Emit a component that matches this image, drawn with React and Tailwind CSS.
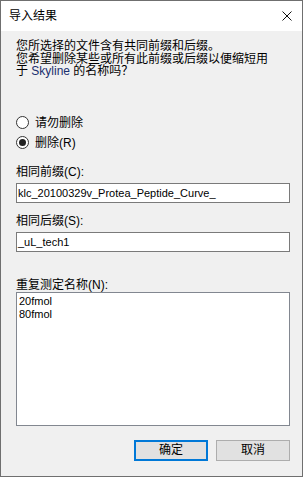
import React from "react";

const font = {
  fontFamily: '"Liberation Sans", "Noto Sans CJK SC", sans-serif',
};

function Radio({ checked, label }) {
  return (
    <div className="flex items-center h-[20px]">
      <span className="w-[13px] h-[13px] rounded-full border border-[#333333] bg-white flex items-center justify-center">
        {checked && <span className="w-[7px] h-[7px] rounded-full bg-[#222222]"></span>}
      </span>
      <span className="ml-[6px]">{label}</span>
    </div>
  );
}

function Field({ label, value }) {
  return (
    <div className="flex flex-col">
      <div className="h-[13px] leading-[13px]">{label}</div>
      <div className="mt-[4px] w-[274px] h-[20px] border border-[#7a7a7a] bg-white px-[1px] text-[11px] leading-[18px] whitespace-nowrap overflow-hidden">
        {value}
      </div>
    </div>
  );
}

export default function App() {
  return (
    <div
      style={font}
      className="w-[303px] h-[477px] border border-[#6f6f6f] bg-[#f0f0f0] flex flex-col text-[12px] text-black"
    >
      <div className="h-[30px] bg-white flex items-center justify-between pl-[8px] pr-[10px]">
        <span>导入结果</span>
        <svg width="10" height="10" viewBox="0 0 10 10">
          <path d="M0.5 0.5 L9.5 9.5 M9.5 0.5 L0.5 9.5" stroke="#111" strokeWidth="1" fill="none" />
        </svg>
      </div>

      <div className="flex flex-col pl-[15px] pt-[9px]">
        <div className="leading-[12.5px]">
          <div>您所选择的文件含有共同前缀和后缀。</div>
          <div>您希望删除某些或所有此前缀或后缀以便缩短用</div>
          <div>
            于 <span className="text-[#1a2f6e]">Skyline</span> 的名称吗？
          </div>
        </div>

        <div className="mt-[35px] flex flex-col">
          <Radio label="请勿删除" />
          <Radio checked label="删除(R)" />
        </div>

        <div className="mt-[13px] flex flex-col gap-[12px]">
          <Field label="相同前缀(C):" value="klc_20100329v_Protea_Peptide_Curve_" />
          <Field label="相同后缀(S):" value="_uL_tech1" />
        </div>

        <div className="mt-[27px] h-[13px] leading-[13px]">重复测定名称(N):</div>
        <div className="w-[274px] h-[134px] border border-[#828790] bg-white px-[2px] pt-[2px] text-[11px] leading-[13px]">
          <div>20fmol</div>
          <div>80fmol</div>
        </div>

        <div className="mt-[14px] flex justify-end gap-[8px] pr-[12px]">
          <button className="w-[74px] h-[21px] border-2 border-[#0078d7] bg-[#e1e1e1] leading-[17px]">
            确定
          </button>
          <button className="w-[74px] h-[21px] border border-[#adadad] bg-[#e1e1e1] leading-[19px]">
            取消
          </button>
        </div>
      </div>
    </div>
  );
}
